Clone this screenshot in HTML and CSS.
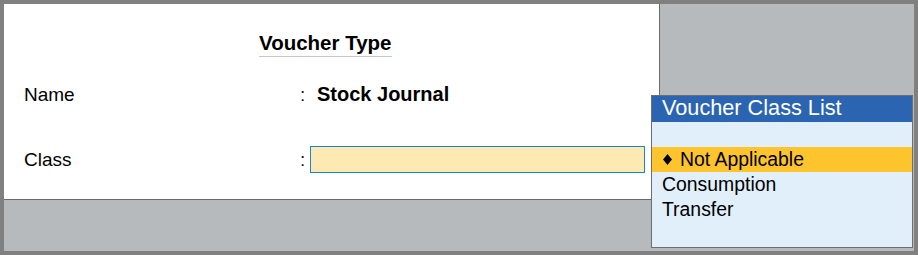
FILE: index.html
```html
<!DOCTYPE html>
<html lang="en">
<head>
    <meta charset="UTF-8">
    <meta name="viewport" content="width=device-width, initial-scale=1.0">
    <title>Voucher Type</title>
    <link rel="stylesheet" href="styles.css">
</head>
<body>
    <div class="screen">
        <div class="voucher">
            <div class="voucher-title"><span>Voucher Type</span></div>
            <div class="field">
                <span class="field-label">Name</span>
                <span class="field-colon">:</span>
                <span class="field-value">Stock Journal</span>
            </div>
            <div class="field field-class">
                <span class="field-label">Class</span>
                <span class="field-colon">:</span>
                <span class="field-input"></span>
            </div>
        </div>
        <div class="class-list">
            <div class="class-list-head">Voucher Class List</div>
            <div class="class-list-body">
                <div class="class-item active">
                    <svg class="mark" width="9" height="11" viewBox="0 0 9 11"><polygon points="4.5,0 9,5.5 4.5,11 0,5.5" fill="#000"/></svg>
                    <span>Not Applicable</span>
                </div>
                <div class="class-item">Consumption</div>
                <div class="class-item">Transfer</div>
            </div>
        </div>
    </div>
</body>
</html>
```

FILE: styles.css
```css
* {
    margin: 0;
    padding: 0;
    box-sizing: border-box;
}
body {
    font-family: "Liberation Sans", Arial, sans-serif;
    color: #000;
    background: #808080;
}
.screen {
    position: relative;
    width: 918px;
    height: 255px;
    border: 4px solid #808080;
    background-color: #b6babd;
}
.voucher {
    width: 656px;
    height: 196px;
    background-color: #fff;
    border-right: 1px solid #6b6b6b;
    border-bottom: 1px solid #6b6b6b;
    padding: 27px 0 0 20px;
}
.voucher-title {
    padding-left: 235px;
}
.voucher-title span {
    display: inline-block;
    font-size: 20.5px;
    font-weight: bold;
    line-height: 24px;
    padding-bottom: 1px;
    border-bottom: 1px solid #c8c8c8;
}
.field {
    display: grid;
    grid-template-columns: 276px 10px 335px;
    align-items: center;
    height: 27px;
    margin-top: 24px;
    font-size: 19px;
    line-height: 27px;
}
.field-class {
    margin-top: 38px;
}
.field-colon {
    color: #2a1010;
}
.field-value {
    font-size: 20px;
    font-weight: bold;
    padding-left: 7px;
}
.field-input {
    height: 27px;
    background-color: #fde9b2;
    border: 1px solid #1a85c8;
}
.class-list {
    position: absolute;
    left: 647px;
    top: 91px;
    width: 262px;
    height: 153px;
    border: 1px solid #6e6e6e;
    background-color: #e1effa;
}
.class-list-head {
    background-color: #2b65b1;
    color: #fff;
    font-size: 21.7px;
    line-height: 24px;
    height: 26px;
    padding: 0 0 2px 10px;
}
.class-list-body {
    padding-top: 25px;
}
.class-item {
    display: flex;
    align-items: center;
    height: 25px;
    line-height: 25px;
    font-size: 19.4px;
    padding-left: 10px;
}
.class-item.active {
    background-color: #fdc42e;
}
.mark {
    margin: 0 8px 0 1px;
}
```
